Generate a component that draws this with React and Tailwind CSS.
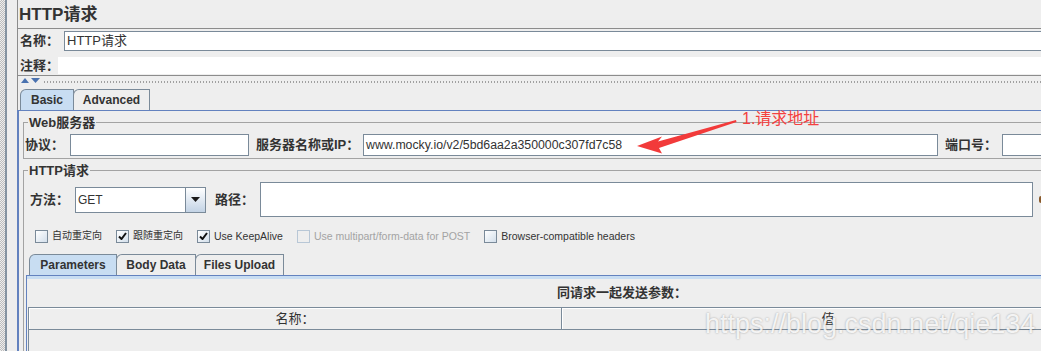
import React from "react";

// Metal "Ocean" look of a Swing form
const Field = ({ className = "", children }) => (
  <div className={`bg-white border border-[#7a8a99] flex items-center shrink-0 ${className}`}>
    {children}
  </div>
);

const Group = ({ title, className = "", children }) => (
  <fieldset className={`shrink-0 border-t border-l border-[#a3a3a3] ${className}`}>
    <legend className="ml-[4px] px-[1px] text-[13px] leading-[15px] font-bold">{title}</legend>
    {children}
  </fieldset>
);

const Label = ({ className = "", children }) => (
  <span className={`shrink-0 text-[13px] font-bold leading-[18px] whitespace-nowrap ${className}`}>
    {children}
  </span>
);

const Tab = ({ selected, className = "", children }) => (
  <div
    className={`h-[21px] shrink-0 border border-b-0 border-[#7a8a99] rounded-tl-[6px] flex items-center justify-center text-[12px] font-bold leading-none ${
      selected ? "bg-[#c8ddf2]" : "bg-[#eeeeee]"
    } ${className}`}
  >
    {children}
  </div>
);

const Check = ({ checked, disabled, cjk, label }) => (
  <div className="flex items-center gap-[4px] shrink-0">
    <div
      className={
        disabled
          ? "w-[13px] h-[13px] border border-[#b8c7d6] bg-[#eeeeee]"
          : "w-[13px] h-[13px] border border-[#7a8a99] bg-linear-to-br from-white to-[#d3dfeb] flex items-center justify-center"
      }
    >
      {checked && (
        <svg width="9" height="8" viewBox="0 0 9 8">
          <path d="M1 4.5L3.5 7L8 1" stroke="#111" strokeWidth="2" fill="none" />
        </svg>
      )}
    </div>
    <span
      className={`leading-[14px] whitespace-nowrap ${cjk ? "text-[10px]" : "text-[10.5px]"} ${
        disabled ? "text-[#a3a3a3]" : "text-[#333333]"
      }`}
    >
      {label}
    </span>
  </div>
);

export default function App() {
  return (
    <div className="relative w-[1041px] h-[351px] overflow-hidden bg-[#eeeeee] text-[#333333] font-['Liberation_Sans','Noto_Sans_CJK_SC',sans-serif] flex items-start">
      {/* left edge of the tree splitter */}
      <div className="w-[5px] h-[351px] shrink-0 bg-[repeating-conic-gradient(#bdbdbd_0_25%,#eeeeee_0_50%)] bg-[length:2px_2px]" />
      <div className="w-[2px] h-[351px] shrink-0 bg-[#8593a1]" />
      <div className="w-[10px] shrink-0" />

      <div className="w-[1300px] shrink-0 flex flex-col">
        {/* title */}
        <div className="h-[28px] shrink-0 border-l border-[#8c8c8c] pl-[1px] pt-[3px]">
          <span className="text-[17px] font-bold leading-[20px]">HTTP请求</span>
        </div>

        {/* name / comment */}
        <div className="h-[48px] shrink-0 border border-r-0 border-[#8c8c8c]">
          <div className="h-[24px] pt-[2px] flex items-start">
            <Label className="w-[46px] pl-[2px] leading-[20px]">名称：</Label>
            <Field className="flex-1 h-[20px] pl-[2px] text-[13px]">HTTP请求</Field>
          </div>
          <div className="h-[22px] pt-[4px] flex items-start">
            <Label className="w-[40px] pl-[2px] leading-[17px]">注释：</Label>
            <div className="flex-1 h-[17px] bg-white" />
          </div>
        </div>

        {/* splitter */}
        <div className="h-[12px] shrink-0 border-l border-[#8c8c8c] flex items-start pt-[2px] pl-[3px] gap-[2px]">
          <svg width="8" height="5" viewBox="0 0 8 5">
            <path d="M0 5L4 0L8 5Z" fill="#4a72b0" />
          </svg>
          <svg width="9" height="5" viewBox="0 0 9 5">
            <path d="M0 0H9L4.5 5Z" fill="#4a72b0" />
          </svg>
          <div className="flex-1 h-[2px] mt-[3px] ml-[2px] bg-[repeating-linear-gradient(to_right,#a0a0a0_0_1px,transparent_1px_3px)]" />
        </div>

        {/* Basic / Advanced tabs */}
        <div className="h-[22px] shrink-0 border-l border-[#8c8c8c] pl-[2px] flex items-end">
          <Tab selected className="w-[54px]">Basic</Tab>
          <Tab className="w-[77px] -ml-px">Advanced</Tab>
        </div>

        <div className="shrink-0 border-t border-l-2 border-[#6382bf] flex flex-col">
          <Group title="Web服务器" className="ml-[4px] mt-[4px] border-b">
            <div className="pt-[4px] pb-[2px] pl-[1px] h-[28px] flex items-center">
              <Label className="w-[45px]">协议：</Label>
              <Field className="w-[179px] h-[22px]" />
              <Label className="ml-[7px] w-[107px]">服务器名称或IP：</Label>
              <Field className="w-[575px] h-[22px] pl-[2px] text-[12.3px]">
                www.mocky.io/v2/5bd6aa2a350000c307fd7c58
              </Field>
              <Label className="ml-[7px] w-[57px]">端口号：</Label>
              <Field className="w-[100px] h-[22px]" />
            </div>
          </Group>

          <Group title="HTTP请求" className="ml-[4px] mt-[4px]">
            <div className="pt-[4px] pl-[6px] flex items-center h-[39px]">
              <Label className="w-[45px]">方法：</Label>
              <div className="w-[131px] h-[26px] flex shrink-0">
                <Field className="flex-1 h-[26px] pl-[2px] text-[12px]">GET</Field>
                <div className="w-[20px] border border-l-0 border-[#7a8a99] bg-linear-to-b from-white to-[#c3d3e5] flex items-center justify-center">
                  <svg width="9" height="5" viewBox="0 0 9 5">
                    <path d="M0 0H9L4.5 5Z" fill="#1a1a1a" />
                  </svg>
                </div>
              </div>
              <Label className="ml-[9px] w-[45px]">路径：</Label>
              <Field className="w-[773px] h-[35px]" />
              <div className="ml-[6px] w-[4px] h-[7px] rounded-full bg-[#8a5a2b]" />
            </div>

            <div className="mt-[12px] ml-[11px] h-[14px] flex items-center gap-[14px]">
              <Check cjk label="自动重定向" />
              <Check cjk checked label="跟随重定向" />
              <Check checked label="Use KeepAlive" />
              <Check disabled label="Use multipart/form-data for POST" />
              <Check label="Browser-compatible headers" />
            </div>

            {/* Parameters / Body Data / Files Upload */}
            <div className="ml-[2px] mt-[11px] w-[1182px] flex flex-col">
              <div className="h-[21px] shrink-0 pl-[3px] flex items-end">
                <Tab selected className="w-[88px]">Parameters</Tab>
                <Tab className="w-[80px] -ml-px">Body Data</Tab>
                <Tab className="w-[89px] -ml-px">Files Upload</Tab>
              </div>
              <div className="border-t border-l border-[#6382bf]">
                <div className="h-[3px] bg-[#c8ddf2]" />
                <div className="pl-[1px]">
                  <div className="pt-[6px] pb-[6px] pl-[8px] text-center text-[13px] font-bold leading-[16px]">
                    同请求一起发送参数：
                  </div>
                  <div className="w-[1066px] border-l border-[#7a8a99]">
                    <div className="flex border-t border-b border-[#7a8a99] h-[23px]">
                      <div className="w-[533px] border-r border-[#7a8a99] shadow-[inset_1px_1px_0_#ffffff] flex items-center justify-center text-[13px]">
                        名称：
                      </div>
                      <div className="flex-1 shadow-[inset_1px_1px_0_#ffffff] flex items-center justify-center text-[13px]">
                        值
                      </div>
                    </div>
                    <div className="h-[60px]" />
                  </div>
                </div>
              </div>
            </div>
          </Group>
        </div>
      </div>

      {/* annotation arrow */}
      <svg className="absolute left-0 top-0 pointer-events-none" width="1041" height="351">
        <path d="M637 146L662 136.5L658 141.5L736 120L736.5 122L659 148L662 153.5Z" fill="#f23a3a" />
      </svg>
      <div className="absolute left-[742px] top-[110px] text-[16px] leading-[17px] text-[#f44040] whitespace-nowrap">
        1.请求地址
      </div>

      {/* watermark */}
      <div className="absolute left-[705px] top-[311px] text-[27px] leading-none text-white/85 whitespace-nowrap pointer-events-none [text-shadow:0_0_2px_rgba(0,0,0,0.35)]">
        https://blog.csdn.net/qie134
      </div>
    </div>
  );
}
